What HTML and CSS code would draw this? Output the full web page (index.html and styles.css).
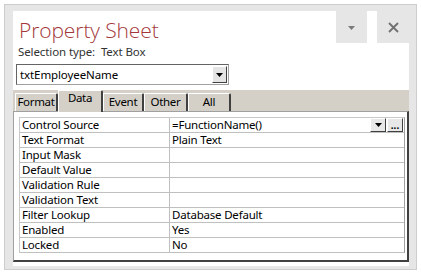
FILE: index.html
```html
<!DOCTYPE html>
<html>
<head>
<meta charset="utf-8">
<link rel="stylesheet" href="styles.css">
</head>
<body>
<div class="frame">
  <div class="panel">
    <div class="header">
      <div class="title">Property Sheet</div>
      <div class="hbtn menu"><svg width="7" height="4" viewBox="0 0 7 4"><path d="M0 0H7L3.5 4Z" fill="#7a7a7a"/></svg></div>
      <div class="gap"></div>
      <div class="hbtn close"><svg width="11" height="11" viewBox="0 0 11 11"><path d="M1 1L10 10M10 1L1 10" stroke="#707070" stroke-width="1.8"/></svg></div>
    </div>
    <div class="seltype">Selection type:&nbsp;&nbsp;Text Box</div>
    <div class="combo">
      <div class="combo-text">txtEmployeeName</div>
      <div class="combo-btn"><svg width="7" height="4" viewBox="0 0 7 4"><path d="M0 0H7L3.5 4Z" fill="#000"/></svg></div>
    </div>
    <div class="tabs">
      <div class="tab">Format</div>
      <div class="tab active">Data</div>
      <div class="tab">Event</div>
      <div class="tab">Other</div>
      <div class="tab">All</div>
    </div>
    <div class="page">
      <div class="grid">
        <div class="row"><div class="k">Control Source</div><div class="v"><span class="vt">=FunctionName()</span><span class="cbtn"><svg width="7" height="4" viewBox="0 0 7 4"><path d="M0 0H7L3.5 4Z" fill="#000"/></svg></span><span class="cbtn dots">...</span></div></div>
        <div class="row"><div class="k">Text Format</div><div class="v">Plain Text</div></div>
        <div class="row"><div class="k">Input Mask</div><div class="v"></div></div>
        <div class="row"><div class="k">Default Value</div><div class="v"></div></div>
        <div class="row"><div class="k">Validation Rule</div><div class="v"></div></div>
        <div class="row"><div class="k">Validation Text</div><div class="v"></div></div>
        <div class="row"><div class="k">Filter Lookup</div><div class="v">Database Default</div></div>
        <div class="row"><div class="k">Enabled</div><div class="v">Yes</div></div>
        <div class="row"><div class="k">Locked</div><div class="v">No</div></div>
      </div>
    </div>
  </div>
</div>
</body>
</html>
```
FILE: styles.css
```css
html, body { margin: 0; padding: 0; background: #fff; }
body { padding: 4px 0 0 4px; font-family: "Noto Sans", "Open Sans", sans-serif; font-size: 12px; color: #000; }
.frame {
  box-sizing: border-box; width: 413px; height: 266px;
  border: 1px solid #cdcdcd; background: #e6e6e6;
  padding: 6px 7px 3px 8px; display: flex;
}
.panel { flex: 1; background: #fff; display: flex; flex-direction: column; }
.header { height: 32px; flex: none; display: flex; align-items: stretch; }
.title {
  flex: 1; padding: 7px 0 0 6px;
  font-family: "Open Sans", sans-serif; font-weight: 300; font-size: 21px;
  color: #a4373a; line-height: 24px; letter-spacing: -0.1px;
}
.hbtn { width: 31px; background: #e6e6e6; display: flex; align-items: center; justify-content: center; }
.hbtn.menu { padding-top: 1px; box-sizing: border-box; }
.gap { width: 10px; }
.hbtn.close { width: 32px; }
.seltype { flex: none; padding: 2px 0 0 5px; height: 17px; line-height: 14px; font-size: 11.5px; color: #333; letter-spacing: -0.1px; }
.combo {
  flex: none; margin: 2px 0 0 3px; width: 213px; height: 21px; box-sizing: border-box;
  border: 1px solid #646464; border-right-color: #a0a0a0; border-bottom-color: #a0a0a0;
  display: flex; align-items: center; background: #fff;
}
.combo-text { flex: 1; padding-left: 3px; font-size: 11.5px; letter-spacing: -0.1px; }
.combo-btn {
  width: 15px; height: 17px; box-sizing: border-box; margin-right: 1px;
  background: #e4e4e4; border: 1px solid #fff; border-right-color: #404040; border-bottom-color: #404040;
  display: flex; align-items: center; justify-content: center;
}
.tabs {
  flex: none; margin-top: 5px; height: 21px; background: #d4d0c8; display: flex; align-items: flex-end;
  padding-left: 2px;
}
.tab {
  box-sizing: border-box; height: 18px; padding: 0; line-height: 16px;
  border-top: 1px solid #fff; border-left: 1px solid #fff; border-right: 2px solid #404040;
  border-top-right-radius: 2px; font-size: 11.5px; text-align: center; letter-spacing: -0.3px;
  white-space: nowrap;
}
.tab:nth-child(1) { width: 43px; }
.tab:nth-child(2) { width: 45px; }
.tab:nth-child(3) { width: 41px; }
.tab:nth-child(4) { width: 44px; }
.tab:nth-child(5) { width: 43px; }
.tab.active { height: 22px; margin-bottom: -1px; line-height: 14px; position: relative; background: #d4d0c8; }
.page {
  flex: 1; box-sizing: border-box; margin-bottom: 4px;
  border-top: 1px solid #a0a0a0; border-left: 1px solid #a0a0a0;
  border-right: 2px solid #404040; border-bottom: 2px solid #404040;
  padding: 5px 2px 6px 5px; background: #fff;
}
.grid { border-top: 1px solid #c8c8c8; border-left: 1px solid #c8c8c8; border-right: 1px solid #a0a0a0; }
.row { display: flex; height: 15px; box-sizing: border-box; border-bottom: 1px solid #c0c0c0; }
.k { width: 150px; box-sizing: border-box; padding-left: 2px; border-right: 1px solid #c0c0c0; line-height: 14px; font-size: 11.5px; letter-spacing: -0.2px; }
.v { flex: 1; padding-left: 2px; line-height: 14px; font-size: 11.5px; display: flex; align-items: center; letter-spacing: -0.2px; }
.vt { flex: 1; }
.cbtn {
  width: 16px; height: 14px; box-sizing: border-box; background: #e8e8e8;
  border: 1px solid #fff; border-right-color: #404040; border-bottom-color: #404040;
  display: flex; align-items: center; justify-content: center; margin-right: 1px;
  font-size: 10px; line-height: 8px; font-weight: bold; letter-spacing: 0;
}
.cbtn.dots { align-items: flex-end; padding-bottom: 2px; }
```
